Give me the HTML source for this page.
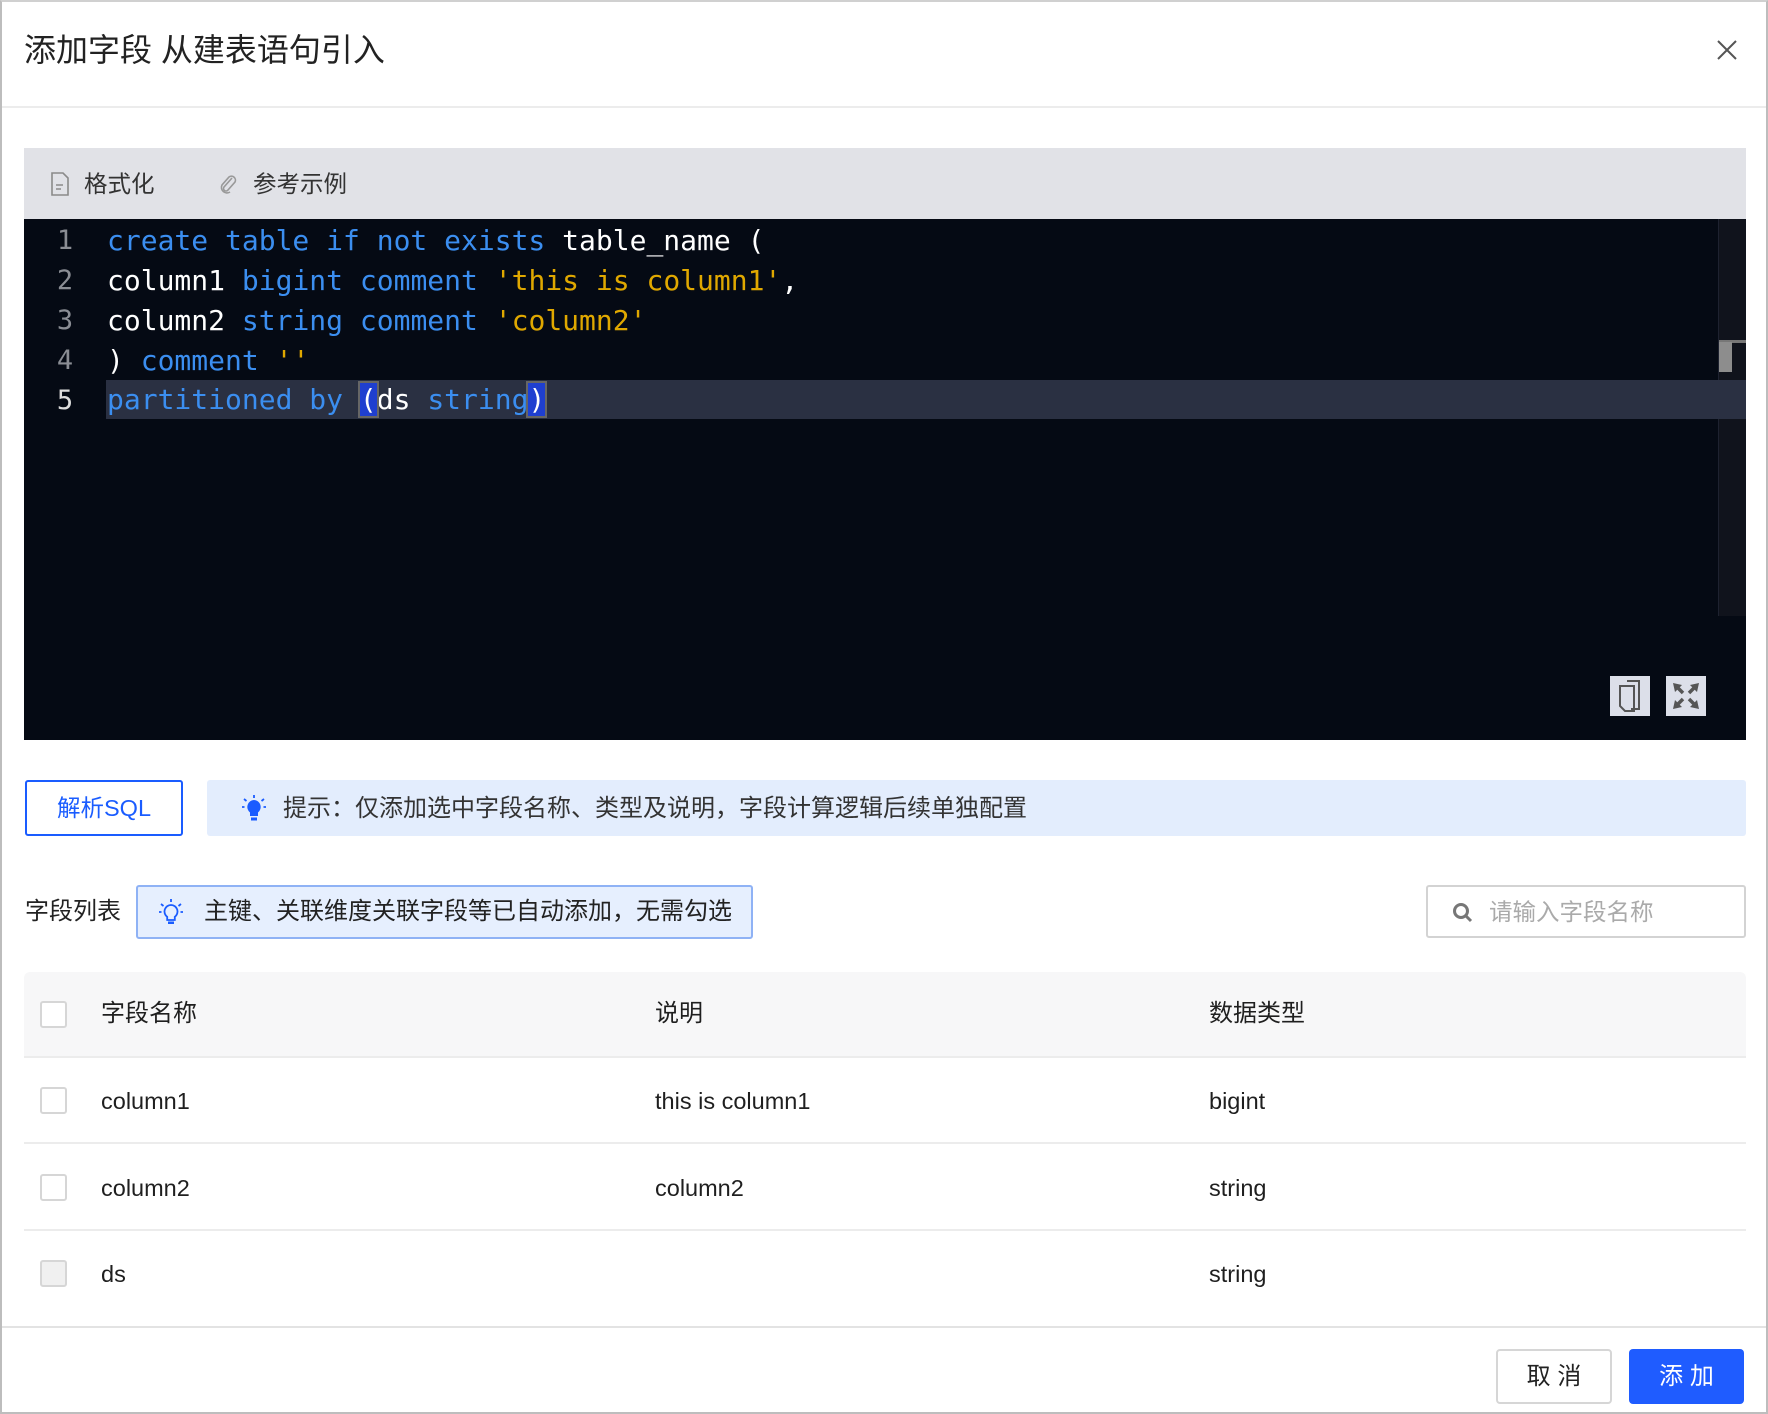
<!DOCTYPE html>
<html><head><meta charset="utf-8">
<style>
*{box-sizing:border-box;margin:0;padding:0}
body{width:1768px;height:1414px;background:#fff;font-family:"Liberation Sans","Noto Sans CJK SC",sans-serif;color:#1f1f1f;position:relative;overflow:hidden}
.abs{position:absolute}
.frame{left:0;top:0;width:1768px;height:1414px;border:2px solid #bdbdbd;border-top-color:#d0d0d0}
.mono{font-family:"DejaVu Sans Mono","Liberation Mono",monospace}
.k{color:#3b8ef0}.s{color:#e0a800}.w{color:#fff}
.line{position:absolute;left:107px;font-size:28px;white-space:pre;height:40px;line-height:40px}
.ln{position:absolute;left:50px;width:30px;text-align:center;font-size:27px;color:#8a8d94;line-height:40px}
.cb{position:absolute;left:40px;width:27px;height:27px;border:2px solid #d6d6d6;border-radius:3px;background:#fff}
.cell{position:absolute;font-size:23.5px;line-height:30px}
.rowline{position:absolute;left:24px;width:1722px;height:2px;background:#ececec}
</style></head><body>
<div class="abs frame"></div>
<div class="abs" style="left:24px;top:30px;font-size:32px;line-height:40px;color:#222">添加字段 从建表语句引入</div>
<svg class="abs" style="left:1716px;top:39px" width="22" height="22" viewBox="0 0 22 22"><path d="M2 2L20 20M20 2L2 20" stroke="#555" stroke-width="2"/></svg>
<div class="abs" style="left:2px;top:106px;width:1764px;height:2px;background:#ececec"></div>

<div class="abs" style="left:24px;top:148px;width:1722px;height:71px;background:#e1e2e7"></div>
<svg class="abs" style="left:50px;top:172px" width="20" height="24" viewBox="0 0 20 24"><path d="M2 1H13L18 6V23H2Z" fill="none" stroke="#8a8a8a" stroke-width="1.6"/><path d="M6 13H13M6 17H11" stroke="#8a8a8a" stroke-width="1.6"/></svg>
<div class="abs" style="left:84px;top:168px;font-size:23.5px;line-height:32px;color:#333">格式化</div>
<svg class="abs" style="left:218px;top:173px" width="20" height="22" viewBox="0 0 20 22"><path d="M14 5L6 14a2.5 2.5 0 0 0 4 3L17 9a4 4 0 0 0-6-5L4 12a5.5 5.5 0 0 0 8 7" fill="none" stroke="#999" stroke-width="1.6"/></svg>
<div class="abs" style="left:253px;top:168px;font-size:23.5px;line-height:32px;color:#333">参考示例</div>

<div class="abs" style="left:24px;top:219px;width:1722px;height:521px;background:#050a14"></div>
<div class="abs" style="left:1718px;top:219px;width:28px;height:397px;background:#10131c;border-left:1px solid #1e2230"></div>
<div class="abs" style="left:106px;top:380px;width:1640px;height:39px;background:#2a3042"></div>
<div class="abs" style="left:1719px;top:340px;width:27px;height:3px;background:#777"></div>
<div class="abs" style="left:1719px;top:342px;width:13px;height:30px;background:#8d8d8d"></div>
<div class="mono">
<div class="ln" style="top:221px">1</div><div class="ln" style="top:261px">2</div><div class="ln" style="top:301px">3</div><div class="ln" style="top:341px">4</div><div class="ln" style="top:381px;color:#ddd">5</div>
<div class="line" style="top:221px"><span class="k">create table if not exists</span> <span class="w">table_name (</span></div>
<div class="line" style="top:261px"><span class="w">column1</span> <span class="k">bigint comment</span> <span class="s">'this is column1'</span><span class="w">,</span></div>
<div class="line" style="top:301px"><span class="w">column2</span> <span class="k">string comment</span> <span class="s">'column2'</span></div>
<div class="line" style="top:341px"><span class="w">)</span> <span class="k">comment</span> <span class="s">''</span></div>
<div class="line" style="top:380px"><span class="k">partitioned by </span><span class="w" style="background:#1f3fd0;outline:2px solid #666">(</span><span class="w">ds</span> <span class="k">string</span><span class="w" style="background:#1f3fd0;outline:2px solid #666">)</span></div>
</div>
<div class="abs" style="left:1610px;top:676px;width:40px;height:40px;background:#dcdfe9"></div>
<svg class="abs" style="left:1617px;top:678px" width="26" height="36" viewBox="0 0 26 36"><path d="M10 3H22V31H14M3 8H17V33H8L3 28Z" fill="none" stroke="#555" stroke-width="2"/></svg>
<div class="abs" style="left:1666px;top:676px;width:40px;height:40px;background:#dcdfe9"></div>
<svg class="abs" style="left:1671px;top:681px" width="30" height="30" viewBox="0 0 30 30" fill="#555"><path d="M2 2L11 4L4 11Z M28 2L26 11L19 4Z M2 28L4 19L11 26Z M28 28L19 26L26 19Z"/><path d="M5 5L12 12M25 5L18 12M5 25L12 18M25 25L18 18" stroke="#555" stroke-width="3.5"/></svg>

<div class="abs" style="left:25px;top:780px;width:158px;height:56px;border:2px solid #1a5cff;border-radius:3px;color:#1a5cff;font-size:23.5px;text-align:center;line-height:52px">解析SQL</div>
<div class="abs" style="left:207px;top:780px;width:1539px;height:56px;background:#e3edfd;border-radius:3px"></div>
<svg class="abs" style="left:242px;top:795px" width="24" height="28" viewBox="0 0 24 28"><path d="M12 5a7 7 0 0 0-4 12.5V21H16V17.5A7 7 0 0 0 12 5Z" fill="#1a5cff"/><rect x="9" y="22.5" width="6" height="3" fill="#1a5cff"/><path d="M12 0V3M2 4L4.5 6M22 4L19.5 6M0 12H2.5M24 12H21.5" stroke="#1a5cff" stroke-width="1.8"/></svg>
<div class="abs" style="left:283px;top:794px;font-size:24px;line-height:30px;color:#333">提示：仅添加选中字段名称、类型及说明，字段计算逻辑后续单独配置</div>

<div class="abs" style="left:25px;top:897px;font-size:24px;line-height:30px;color:#222">字段列表</div>
<div class="abs" style="left:136px;top:885px;width:617px;height:54px;background:#e6effe;border:2px solid #8fb2f5;border-radius:3px"></div>
<svg class="abs" style="left:159px;top:899px" width="24" height="28" viewBox="0 0 24 28"><path d="M12 6a6.5 6.5 0 0 0-3.8 11.8V21H15.8V17.8A6.5 6.5 0 0 0 12 6Z" fill="none" stroke="#1a5cff" stroke-width="1.8"/><rect x="9" y="22.5" width="6" height="2.5" fill="#1a5cff"/><path d="M12 0V3M2 5L4.5 7M22 5L19.5 7M0 13H2.5M24 13H21.5" stroke="#1a5cff" stroke-width="1.8"/></svg>
<div class="abs" style="left:204px;top:897px;font-size:24px;line-height:30px;color:#222">主键、关联维度关联字段等已自动添加，无需勾选</div>

<div class="abs" style="left:1426px;top:885px;width:320px;height:53px;border:2px solid #d3d3d3;border-radius:3px"></div>
<svg class="abs" style="left:1452px;top:902px" width="22" height="22" viewBox="0 0 22 22"><circle cx="9" cy="9" r="6.5" fill="none" stroke="#777" stroke-width="3"/><path d="M14 14L19 19" stroke="#777" stroke-width="3"/></svg>
<div class="abs" style="left:1489px;top:897px;font-size:23.5px;line-height:30px;color:#aaa">请输入字段名称</div>

<div class="abs" style="left:24px;top:972px;width:1722px;height:85px;background:#f7f7f8;border-radius:6px 6px 0 0"></div>
<div class="rowline" style="top:1056px"></div>
<div class="rowline" style="top:1142px"></div>
<div class="rowline" style="top:1229px"></div>
<div class="cb" style="top:1001px"></div>
<div class="cell" style="left:101px;top:999px;font-size:24px">字段名称</div>
<div class="cell" style="left:655px;top:999px;font-size:24px">说明</div>
<div class="cell" style="left:1209px;top:999px;font-size:24px">数据类型</div>
<div class="cb" style="top:1087px"></div>
<div class="cell" style="left:101px;top:1086px">column1</div>
<div class="cell" style="left:655px;top:1086px">this is column1</div>
<div class="cell" style="left:1209px;top:1086px">bigint</div>
<div class="cb" style="top:1174px"></div>
<div class="cell" style="left:101px;top:1173px">column2</div>
<div class="cell" style="left:655px;top:1173px">column2</div>
<div class="cell" style="left:1209px;top:1173px">string</div>
<div class="cb" style="top:1260px;background:#f0f0f0"></div>
<div class="cell" style="left:101px;top:1259px">ds</div>
<div class="cell" style="left:1209px;top:1259px">string</div>

<div class="abs" style="left:2px;top:1326px;width:1764px;height:2px;background:#e3e3e3"></div>
<div class="abs" style="left:1496px;top:1349px;width:116px;height:55px;border:2px solid #d6d6d6;border-radius:4px;font-size:24px;text-align:center;line-height:51px;color:#222">取 消</div>
<div class="abs" style="left:1629px;top:1349px;width:115px;height:55px;background:#1f5cff;border-radius:4px;font-size:24px;text-align:center;line-height:55px;color:#fff">添 加</div>
</body></html>
